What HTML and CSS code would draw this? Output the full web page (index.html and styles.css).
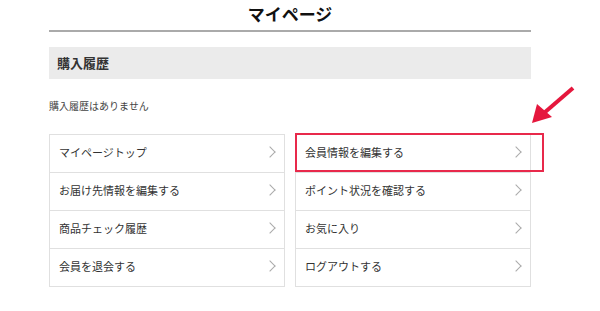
FILE: index.html
```html
<!DOCTYPE html>
<html lang="ja">

<head>
    <meta charset="UTF-8">
    <meta name="viewport" content="width=device-width, initial-scale=1.0">
    <title>マイページ</title>
    <link rel="stylesheet" href="styles.css">
</head>

<body>
    <div class="page">
        <h1 class="title">マイページ</h1>

        <h2 class="section">購入履歴</h2>
        <p class="empty">購入履歴はありません</p>

        <div class="menu">
            <ul class="col">
                <li><a href="#">マイページトップ</a></li>
                <li><a href="#">お届け先情報を編集する</a></li>
                <li><a href="#">商品チェック履歴</a></li>
                <li><a href="#">会員を退会する</a></li>
            </ul>
            <ul class="col">
                <li><a href="#">会員情報を編集する</a><span class="mark"></span></li>
                <li><a href="#">ポイント状況を確認する</a></li>
                <li><a href="#">お気に入り</a></li>
                <li><a href="#">ログアウトする</a></li>
            </ul>
        </div>

        <!-- 注目の矢印 -->
        <svg class="arrow" width="55" height="50" viewBox="0 0 55 50">
            <line x1="48" y1="8" x2="19" y2="33" stroke="#e5173d" stroke-width="4" />
            <polygon points="7,43 12,24 27,37" fill="#e5173d" />
        </svg>
    </div>
</body>

</html>
```

FILE: styles.css
```css
* {
    margin: 0;
    padding: 0;
    box-sizing: border-box;
}

body {
    background: #fff;
    color: #333;
    font-family: "Noto Sans CJK JP", "Noto Sans", sans-serif;
}

.page {
    width: 482px;
    margin-left: 49px;
    position: relative;
}

.title {
    font-size: 17px;
    font-weight: bold;
    color: #111;
    text-align: center;
    line-height: 28px;
    padding-bottom: 2px;
    border-bottom: 2px solid #aaa;
}

.section {
    margin-top: 15px;
    height: 32px;
    line-height: 32px;
    padding-left: 8px;
    background-color: #ebebeb;
    font-size: 13px;
    font-weight: bold;
    color: #333;
}

.empty {
    margin-top: 19px;
    font-size: 10px;
    line-height: 16px;
    color: #444;
}

.menu {
    margin-top: 20px;
    display: grid;
    grid-template-columns: 236px 236px;
    column-gap: 10px;
}

.col {
    list-style: none;
    border: 1px solid #e0e0e0;
}

.col li {
    position: relative;
    height: 38px;
    border-bottom: 1px solid #e0e0e0;
}

.col li:last-child {
    height: 37px;
    border-bottom: none;
}

.col a {
    display: flex;
    align-items: center;
    justify-content: space-between;
    height: 100%;
    padding: 0 7px 3px 9px;
    font-size: 11px;
    color: #333;
    text-decoration: none;
}

.col a::after {
    content: "";
    width: 7px;
    height: 7px;
    margin-right: 3px;
    border-top: 1px solid #aaa;
    border-right: 1px solid #aaa;
    transform: rotate(45deg);
}

.mark {
    position: absolute;
    left: -1px;
    top: -2px;
    width: 249px;
    height: 39px;
    border: 2px solid #e8294b;
    pointer-events: none;
}

.arrow {
    position: absolute;
    left: 476px;
    top: 80px;
}
```
